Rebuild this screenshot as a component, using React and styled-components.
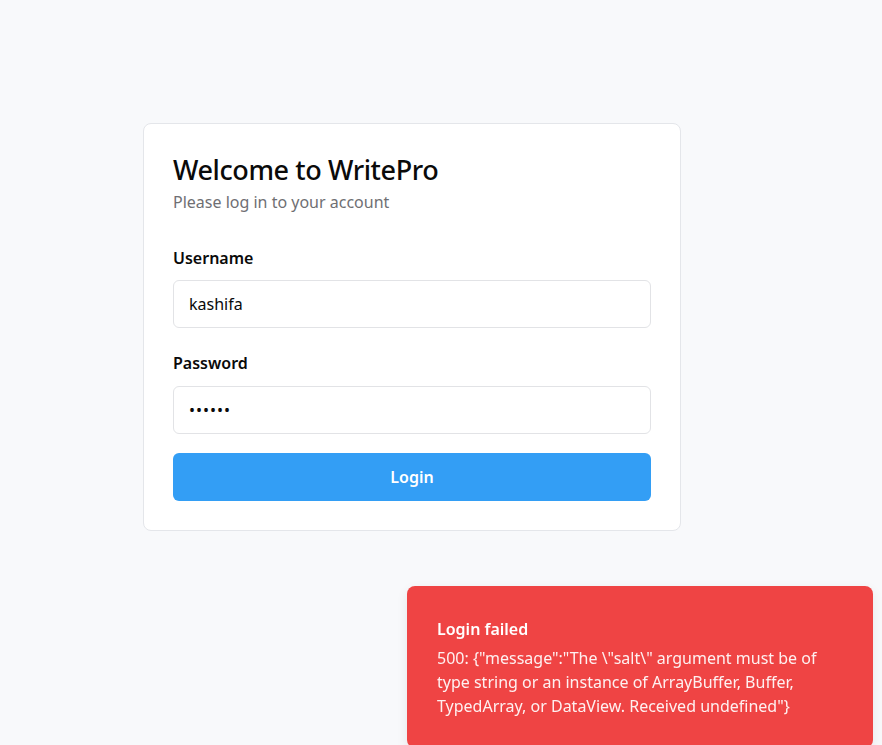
import React, { useState } from "react";
import styled, { createGlobalStyle } from "styled-components";

const GlobalStyle = createGlobalStyle`
  html, body {
    margin: 0;
    padding: 0;
    background: #f8f9fb;
    font-family: "Noto Sans", "Open Sans", sans-serif;
    color: #0a0a0a;
  }
  * { box-sizing: border-box; }
`;

const Page = styled.div`
  min-height: 745px;
  padding: 123px 0 0 143px;
`;

const Card = styled.form`
  width: 538px;
  background: #ffffff;
  border: 1px solid #e4e6ea;
  border-radius: 8px;
  padding: 29px 29px 29px;
  display: flex;
  flex-direction: column;
`;

const Title = styled.h1`
  margin: 0;
  font-size: 27px;
  line-height: 34px;
  font-weight: 500;
  letter-spacing: -0.4px;
`;

const Subtitle = styled.p`
  margin: 3px 0 0;
  font-size: 16px;
  line-height: 24px;
  color: #6f6f73;
`;

const Field = styled.div`
  display: flex;
  flex-direction: column;
  margin-top: ${(p) => p.$top}px;
`;

const Label = styled.label`
  font-size: 16px;
  line-height: 22px;
  font-weight: 600;
  margin-bottom: ${(p) => p.$gap}px;
`;

const Input = styled.input`
  height: 48px;
  width: 100%;
  border: 1px solid #e2e3e6;
  border-radius: 6px;
  padding: 0 15px;
  font-family: inherit;
  font-size: 16px;
  color: #0a0a0a;
  background: #ffffff;
  outline: none;
  letter-spacing: ${(p) => (p.type === "password" ? "1px" : "0")};
`;

const Button = styled.button`
  margin-top: 19px;
  height: 48px;
  width: 100%;
  border: none;
  border-radius: 6px;
  background: #339ef5;
  color: #ffffff;
  font-family: inherit;
  font-size: 16px;
  font-weight: 600;
  cursor: pointer;
`;

const Toast = styled.div`
  position: fixed;
  top: 586px;
  left: 407px;
  width: 466px;
  height: 162px;
  background: #ef4444;
  border-radius: 8px;
  padding: 32px 30px;
  color: #ffffff;
  box-shadow: 0 4px 12px rgba(0, 0, 0, 0.08);
`;

const ToastTitle = styled.div`
  font-size: 16px;
  line-height: 22px;
  font-weight: 600;
`;

const ToastMessage = styled.div`
  margin-top: 6px;
  font-size: 16px;
  line-height: 24px;
  color: rgba(255, 255, 255, 0.92);
`;

export default function App() {
  const [username, setUsername] = useState("kashifa");
  const [password, setPassword] = useState("123456");

  return (
    <>
      <GlobalStyle />
      <Page>
        <Card onSubmit={(e) => e.preventDefault()}>
          <Title>Welcome to WritePro</Title>
          <Subtitle>Please log in to your account</Subtitle>
          <Field $top={33}>
            <Label $gap={11} htmlFor="username">Username</Label>
            <Input
              id="username"
              value={username}
              onChange={(e) => setUsername(e.target.value)}
            />
          </Field>
          <Field $top={24}>
            <Label $gap={12} htmlFor="password">Password</Label>
            <Input
              id="password"
              type="password"
              value={password}
              onChange={(e) => setPassword(e.target.value)}
            />
          </Field>
          <Button type="submit">Login</Button>
        </Card>
      </Page>
      <Toast>
        <ToastTitle>Login failed</ToastTitle>
        <ToastMessage>
          500: {'{"message":"The \\"salt\\" argument must be of type string or an instance of ArrayBuffer, Buffer, TypedArray, or DataView. Received undefined"}'}
        </ToastMessage>
      </Toast>
    </>
  );
}
